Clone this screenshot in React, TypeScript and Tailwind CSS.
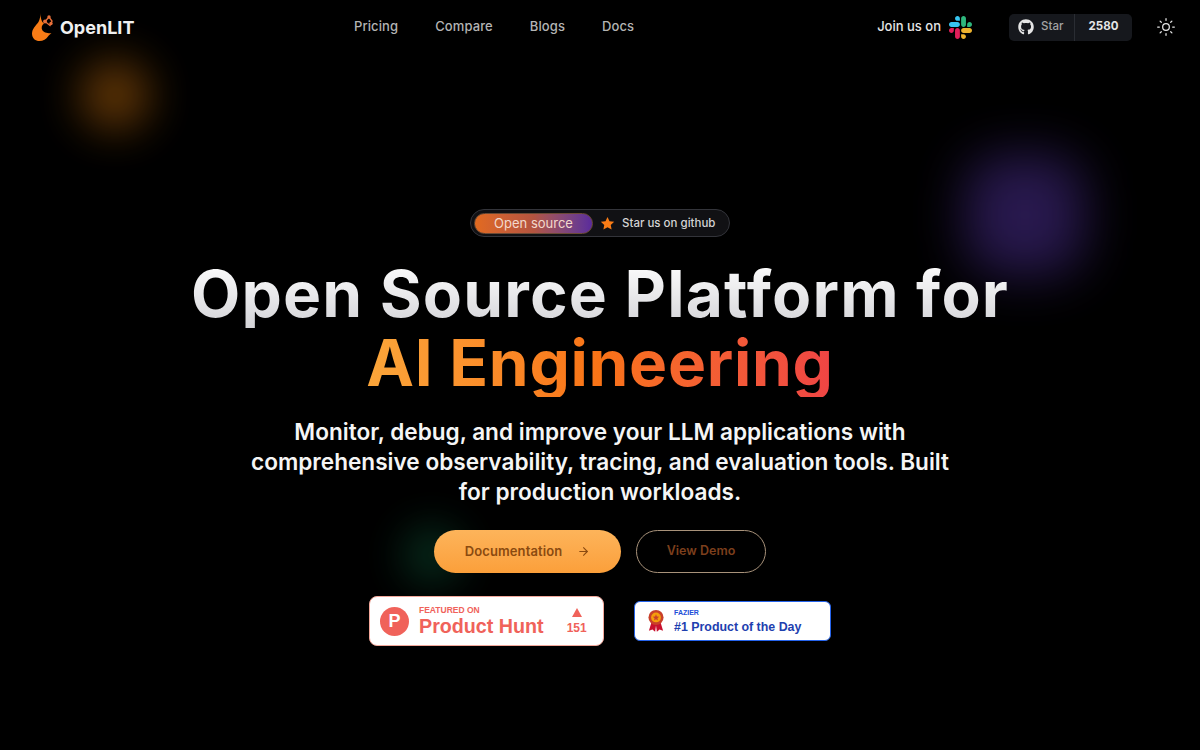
import { Sun, ArrowRight } from "lucide-react";
import { FaGithub } from "react-icons/fa";

const font = "[font-family:'Inter','Liberation_Sans',sans-serif]";

function Logo() {
  return (
    <svg width="22" height="30" viewBox="0 0 22 30" className="mr-[7px]">
      <path d="M9.5 1 C9.5 4 9 7 7.5 10 C4.5 14 1 17 1 21.5 C1 26.5 4.5 29 8.5 29 C12 29 15.5 27 17 24.5 C18 23 19 22 20.5 21.5 C17 21 13.5 21 11.5 18.5 C10 16 10.5 13.5 13 11.5 C10.5 10 9.5 6 9.5 1 Z" fill="#f97c16" />
      <path d="M14 9.5 L18 5 L21 9 L19 13.5 Z" fill="none" stroke="#e8703a" strokeWidth="1.4" />
      <circle cx="18" cy="5" r="1.7" fill="#e8703a" />
      <circle cx="14" cy="9.5" r="1.9" fill="#e8703a" />
      <circle cx="20" cy="11.5" r="1.7" fill="#e8703a" />
    </svg>
  );
}

function Slack() {
  return (
    <svg width="23" height="23" viewBox="0 0 122.8 122.8">
      <path d="M25.8 77.6c0 7.1-5.8 12.9-12.9 12.9S0 84.7 0 77.6s5.8-12.9 12.9-12.9h12.9v12.9zm6.5 0c0-7.1 5.8-12.9 12.9-12.9s12.9 5.8 12.9 12.9v32.3c0 7.1-5.8 12.9-12.9 12.9s-12.9-5.8-12.9-12.9V77.6z" fill="#e01e5a" />
      <path d="M45.2 25.8c-7.1 0-12.9-5.8-12.9-12.9S38.1 0 45.2 0s12.9 5.8 12.9 12.9v12.9H45.2zm0 6.5c7.1 0 12.9 5.8 12.9 12.9s-5.8 12.9-12.9 12.9H12.9C5.8 58.1 0 52.3 0 45.2s5.8-12.9 12.9-12.9h32.3z" fill="#36c5f0" />
      <path d="M97 45.2c0-7.1 5.8-12.9 12.9-12.9s12.9 5.8 12.9 12.9-5.8 12.9-12.9 12.9H97V45.2zm-6.5 0c0 7.1-5.8 12.9-12.9 12.9s-12.9-5.8-12.9-12.9V12.9C64.7 5.8 70.5 0 77.6 0s12.9 5.8 12.9 12.9v32.3z" fill="#2eb67d" />
      <path d="M77.6 97c7.1 0 12.9 5.8 12.9 12.9s-5.8 12.9-12.9 12.9-12.9-5.8-12.9-12.9V97h12.9zm0-6.5c-7.1 0-12.9-5.8-12.9-12.9s5.8-12.9 12.9-12.9h32.3c7.1 0 12.9 5.8 12.9 12.9s-5.8 12.9-12.9 12.9H77.6z" fill="#ecb22e" />
    </svg>
  );
}

function Medal() {
  return (
    <svg width="16" height="24" viewBox="0 0 18 26">
      <path d="M4 14 L1 24 L5 22.5 L8 25 L9 18 L10 25 L13 22.5 L17 24 L14 14 Z" fill="#c8102e" />
      <circle cx="9" cy="9" r="8.5" fill="#c8402a" />
      <circle cx="9" cy="9" r="5.5" fill="#f59e0b" />
      <path d="M9 5.5 L10 8 L12.6 8.2 L10.6 9.9 L11.2 12.4 L9 11 L6.8 12.4 L7.4 9.9 L5.4 8.2 L8 8 Z" fill="#c8402a" />
    </svg>
  );
}

export default function App() {
  return (
    <div className={`relative h-[750px] w-[1200px] overflow-hidden bg-black text-white ${font}`}>
      <div className="absolute left-[80px] top-[60px] h-[70px] w-[70px] rounded-full bg-[#7a4408] opacity-80 blur-[22px]" />
      <div className="absolute left-[965px] top-[155px] h-[120px] w-[120px] rounded-[36px] bg-[#3a2470] opacity-70 blur-[26px]" />
      <div className="absolute left-[402px] top-[525px] h-[60px] w-[60px] rounded-full bg-[#0b3d28] opacity-70 blur-[20px]" />

      <header className="relative flex h-[54px] items-center pl-[31px] pr-[24px]">
        <div className="flex w-[323px] items-center">
          <Logo />
          <span className="text-[18px] font-bold text-[#f0f0f0]">OpenLIT</span>
        </div>
        <nav className="flex items-center gap-[37px] text-[13px] font-medium tracking-[0.1px] text-[#b4b4b4]">
          <span>Pricing</span>
          <span>Compare</span>
          <span>Blogs</span>
          <span>Docs</span>
        </nav>
        <div className="ml-auto flex items-center">
          <span className="mr-[8px] text-[13px] font-medium text-[#e5e5e5]">Join us on</span>
          <Slack />
          <div className="ml-[37px] flex h-[27px] items-center rounded-[5px] bg-[#16181d] text-[11.5px] font-medium">
            <div className="flex h-full w-[66px] items-center gap-[7px] border-r border-[#2a2d33] pl-[9px] text-[#a3a3a3]">
              <FaGithub className="text-[16px] text-[#e5e5e5]" />
              <span>Star</span>
            </div>
            <div className="flex w-[57px] justify-center font-bold text-[#e5e5e5]">2580</div>
          </div>
          <Sun className="ml-[24px] h-[20px] w-[20px] text-[#e5e5e5]" strokeWidth={1.5} />
        </div>
      </header>

      <main className="relative flex flex-col items-center pt-[155px]">
        <div className="flex h-[28px] w-[260px] items-center rounded-full border border-[#33343a] bg-[#111114] pl-[3px] pt-[1px]">
          <span className="flex h-[21px] w-[119px] items-center justify-center rounded-full border border-[#6b4a35] bg-gradient-to-r from-[#e26a1f] via-[#b4543f] to-[#5b2a9c] text-[13px] text-[#f3d9cc]">Open source</span>
          <svg width="15" height="15" viewBox="0 0 24 24" className="ml-[7px]">
            <path d="M12 1.5 L15.2 8.3 L22.7 9.2 L17.2 14.3 L18.6 21.7 L12 18 L5.4 21.7 L6.8 14.3 L1.3 9.2 L8.8 8.3 Z" fill="#f97c16" />
          </svg>
          <span className="ml-[7px] text-[11.5px] font-medium text-[#d4d4d4]">Star us on github</span>
        </div>

        <h1 className="mt-[22px] text-center text-[64px] font-[650] leading-[69px]">
          <span className="block bg-gradient-to-b from-white to-[#d4d4d8] bg-clip-text tracking-[1.2px] text-transparent">Open Source Platform for</span>
          <span className="mx-auto block w-fit bg-gradient-to-r from-[#fba63a] via-[#f97316] to-[#ef4444] bg-clip-text tracking-[0.7px] text-transparent">AI Engineering</span>
        </h1>

        <p className="mt-[20px] w-[710px] text-center text-[22.6px] font-semibold leading-[30px] text-[#f5f5f5]">
          Monitor, debug, and improve your LLM applications with comprehensive observability, tracing, and evaluation tools. Built for production workloads.
        </p>

        <div className="mt-[23px] flex items-center gap-[15px] text-[12.5px] font-semibold">
          <div className="flex h-[43px] w-[187px] items-center justify-center gap-[15px] rounded-full bg-gradient-to-b from-[#fdb45a] to-[#fb9f3a] text-[13px] tracking-[0.1px] text-[#8a4a10]">
            <span>Documentation</span>
            <ArrowRight className="h-[13px] w-[13px]" />
          </div>
          <div className="flex h-[43px] w-[130px] items-center justify-center rounded-full border border-[#a8927a] text-[#7c3f1c]">View Demo</div>
        </div>

        <div className="mt-[23px] flex items-center gap-[30px] [font-family:'Liberation_Sans',Arial,sans-serif]">
          <div className="flex h-[50px] w-[235px] items-center rounded-[8px] border border-[#f2a79a] bg-white pl-[10px] text-[#f0625a]">
            <div className="flex h-[29px] w-[29px] items-center justify-center rounded-full bg-[#f0625a] text-[18px] font-bold text-white">P</div>
            <div className="ml-[10px] flex flex-col">
              <span className="text-[8.5px] font-bold leading-[9px]">FEATURED ON</span>
              <span className="text-[19.7px] font-bold leading-[22px]">Product Hunt</span>
            </div>
            <div className="ml-[23px] flex flex-col items-center">
              <span className="h-0 w-0 border-x-[5px] border-b-[9px] border-x-transparent border-b-[#f0625a]" />
              <span className="mt-[5px] text-[12px] font-bold leading-[13px]">151</span>
            </div>
          </div>
          <div className="flex h-[40px] w-[197px] items-center rounded-[6px] border border-[#2563eb] bg-white pl-[13px] text-[#1d4ed8]">
            <Medal />
            <div className="ml-[10px] flex flex-col">
              <span className="text-[7px] font-bold leading-[10px]">FAZIER</span>
              <span className="mt-[1px] text-[12.4px] font-bold leading-[16px] text-[#1e40af]">#1 Product of the Day</span>
            </div>
          </div>
        </div>
      </main>
    </div>
  );
}
